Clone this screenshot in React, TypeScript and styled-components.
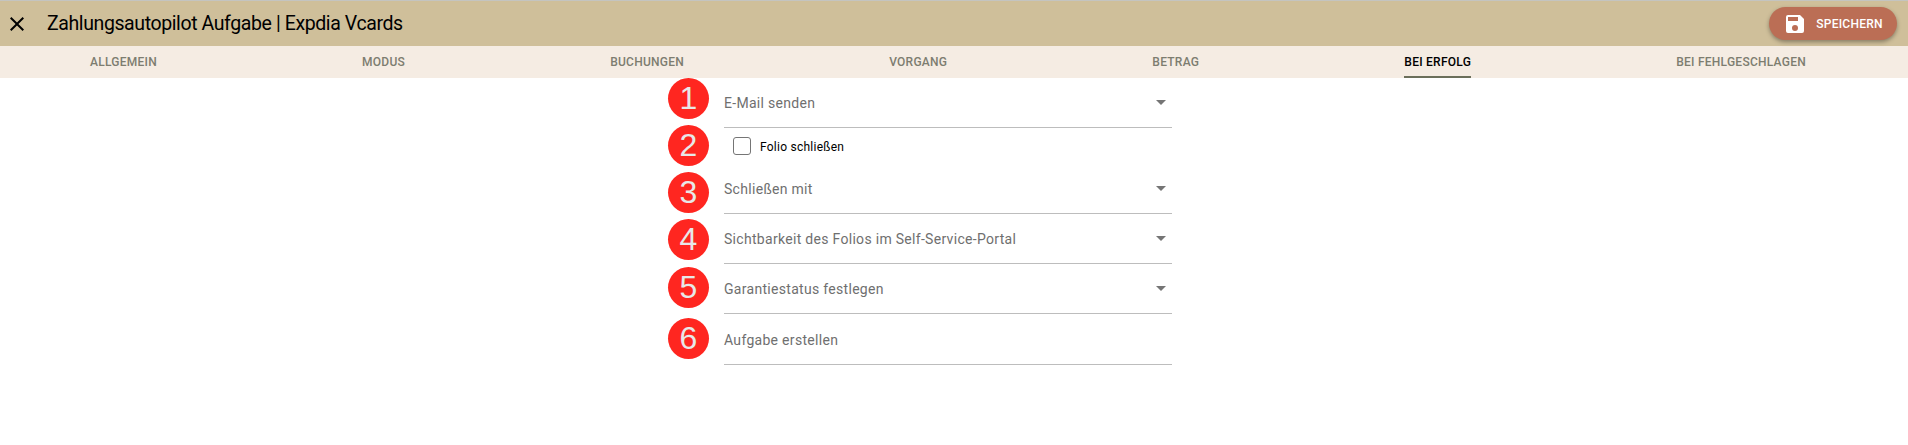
import styled, { createGlobalStyle } from "styled-components";

const GlobalStyle = createGlobalStyle`
  html, body {
    margin: 0;
    padding: 0;
    background: #fff;
    font-family: Roboto, "Liberation Sans", sans-serif;
  }
`;

const Page = styled.div`
  width: 1908px;
  height: 445px;
  overflow: hidden;
  background: #fff;
`;

const Toolbar = styled.header`
  height: 45px;
  border-top: 1px solid #c4c4c0;
  background: #cfbf9a;
  display: flex;
  align-items: center;
  padding: 0 11px 0 5px;
`;

const CloseButton = styled.button`
  display: flex;
  padding: 0;
  border: 0;
  background: none;
  color: #000;
`;

const Title = styled.h1`
  margin: 0 0 0 18px;
  font-size: 19.5px;
  font-weight: 400;
  letter-spacing: -0.4px;
  color: #000;
  flex: 1;
`;

const SaveButton = styled.button`
  height: 33px;
  width: 128px;
  border: 0;
  border-radius: 17px;
  background: #bb6e55;
  color: #fff;
  display: flex;
  align-items: center;
  justify-content: center;
  gap: 9px;
  font: 500 12px Roboto, sans-serif;
  letter-spacing: 0.25px;
  box-shadow: 0 2px 4px rgba(0, 0, 0, 0.35);
`;

const TabBar = styled.nav`
  height: 32px;
  background: #f5ece3;
  display: flex;
  justify-content: space-between;
  padding: 0 102px 0 90px;
`;

const Tab = styled.div<{ $active?: boolean }>`
  height: 32px;
  box-sizing: border-box;
  padding-top: 2px;
  display: flex;
  align-items: center;
  font-size: 12px;
  font-weight: 500;
  letter-spacing: 0.25px;
  color: ${({ $active }) => ($active ? "#000" : "#7d7d70")};
  border-bottom: 2px solid ${({ $active }) => ($active ? "#6b6f5b" : "transparent")};
`;

const Form = styled.main`
  width: 448px;
  margin-left: 724px;
  display: flex;
  flex-direction: column;
`;

const Row = styled.div<{ $checkbox?: boolean; $last?: boolean }>`
  position: relative;
  box-sizing: border-box;
  height: ${({ $checkbox, $last }) => ($checkbox ? "36px" : $last ? "51px" : "50px")};
  display: flex;
  align-items: center;
  justify-content: space-between;
  font-size: 14px;
  letter-spacing: 0.3px;
  color: #6f6f6f;
  padding-left: ${({ $checkbox }) => ($checkbox ? "9px" : "0")};
  padding-top: ${({ $last }) => ($last ? "1px" : "0")};
  border-bottom: ${({ $checkbox }) => ($checkbox ? "0" : "1px solid #bdbdbd")};
`;

const Marker = styled.span<{ $top: number }>`
  position: absolute;
  left: -56px;
  top: ${({ $top }) => $top}px;
  width: 41px;
  height: 41px;
  border-radius: 50%;
  background: #ff2620;
  color: #e8e8e8;
  display: flex;
  align-items: center;
  justify-content: center;
  font: 32px "Liberation Sans", sans-serif;
  letter-spacing: 0;
`;

const Caret = styled.span`
  width: 0;
  height: 0;
  margin-right: 6px;
  border-left: 5px solid transparent;
  border-right: 5px solid transparent;
  border-top: 5px solid #757575;
`;

const CheckBox = styled.span`
  box-sizing: border-box;
  width: 18px;
  height: 18px;
  border: 1px solid #757575;
  border-radius: 3px;
`;

const CheckLabel = styled.span`
  margin-left: 9px;
  padding-top: 1px;
  font-size: 12px;
  letter-spacing: 0.25px;
  color: #000;
`;

const CheckGroup = styled.label`
  display: flex;
  align-items: center;
`;

const fields = [
  { label: "E-Mail senden", top: 0, caret: true },
  { label: "Folio schließen", top: -3, checkbox: true },
  { label: "Schließen mit", top: 8, caret: true },
  { label: "Sichtbarkeit des Folios im Self-Service-Portal", top: 5, caret: true },
  { label: "Garantiestatus festlegen", top: 3, caret: true },
  { label: "Aufgabe erstellen", top: 4 },
];

const tabs = ["ALLGEMEIN", "MODUS", "BUCHUNGEN", "VORGANG", "BETRAG", "BEI ERFOLG", "BEI FEHLGESCHLAGEN"];

export default function App() {
  return (
    <Page>
      <GlobalStyle />
      <Toolbar>
        <CloseButton aria-label="Schließen">
          <svg width="24" height="24" viewBox="0 0 24 24" fill="currentColor">
            <path d="M19 6.41 17.59 5 12 10.59 6.41 5 5 6.41 10.59 12 5 17.59 6.41 19 12 13.41 17.59 19 19 17.59 13.41 12z" />
          </svg>
        </CloseButton>
        <Title>Zahlungsautopilot Aufgabe | Expdia Vcards</Title>
        <SaveButton>
          <svg width="24" height="24" viewBox="0 0 24 24" fill="#fff">
            <path d="M17 3H5a2 2 0 0 0-2 2v14a2 2 0 0 0 2 2h14a2 2 0 0 0 2-2V7l-4-4zm-5 16a3 3 0 1 1 0-6 3 3 0 0 1 0 6zm3-10H5V5h10v4z" />
          </svg>
          SPEICHERN
        </SaveButton>
      </Toolbar>
      <TabBar>
        {tabs.map((t) => (
          <Tab key={t} $active={t === "BEI ERFOLG"}>
            {t}
          </Tab>
        ))}
      </TabBar>
      <Form>
        {fields.map((f, i) => (
          <Row key={f.label} $checkbox={f.checkbox} $last={i === fields.length - 1}>
            <Marker $top={f.top}>{i + 1}</Marker>
            {f.checkbox ? (
              <CheckGroup>
                <CheckBox />
                <CheckLabel>{f.label}</CheckLabel>
              </CheckGroup>
            ) : (
              f.label
            )}
            {f.caret && <Caret />}
          </Row>
        ))}
      </Form>
    </Page>
  );
}
